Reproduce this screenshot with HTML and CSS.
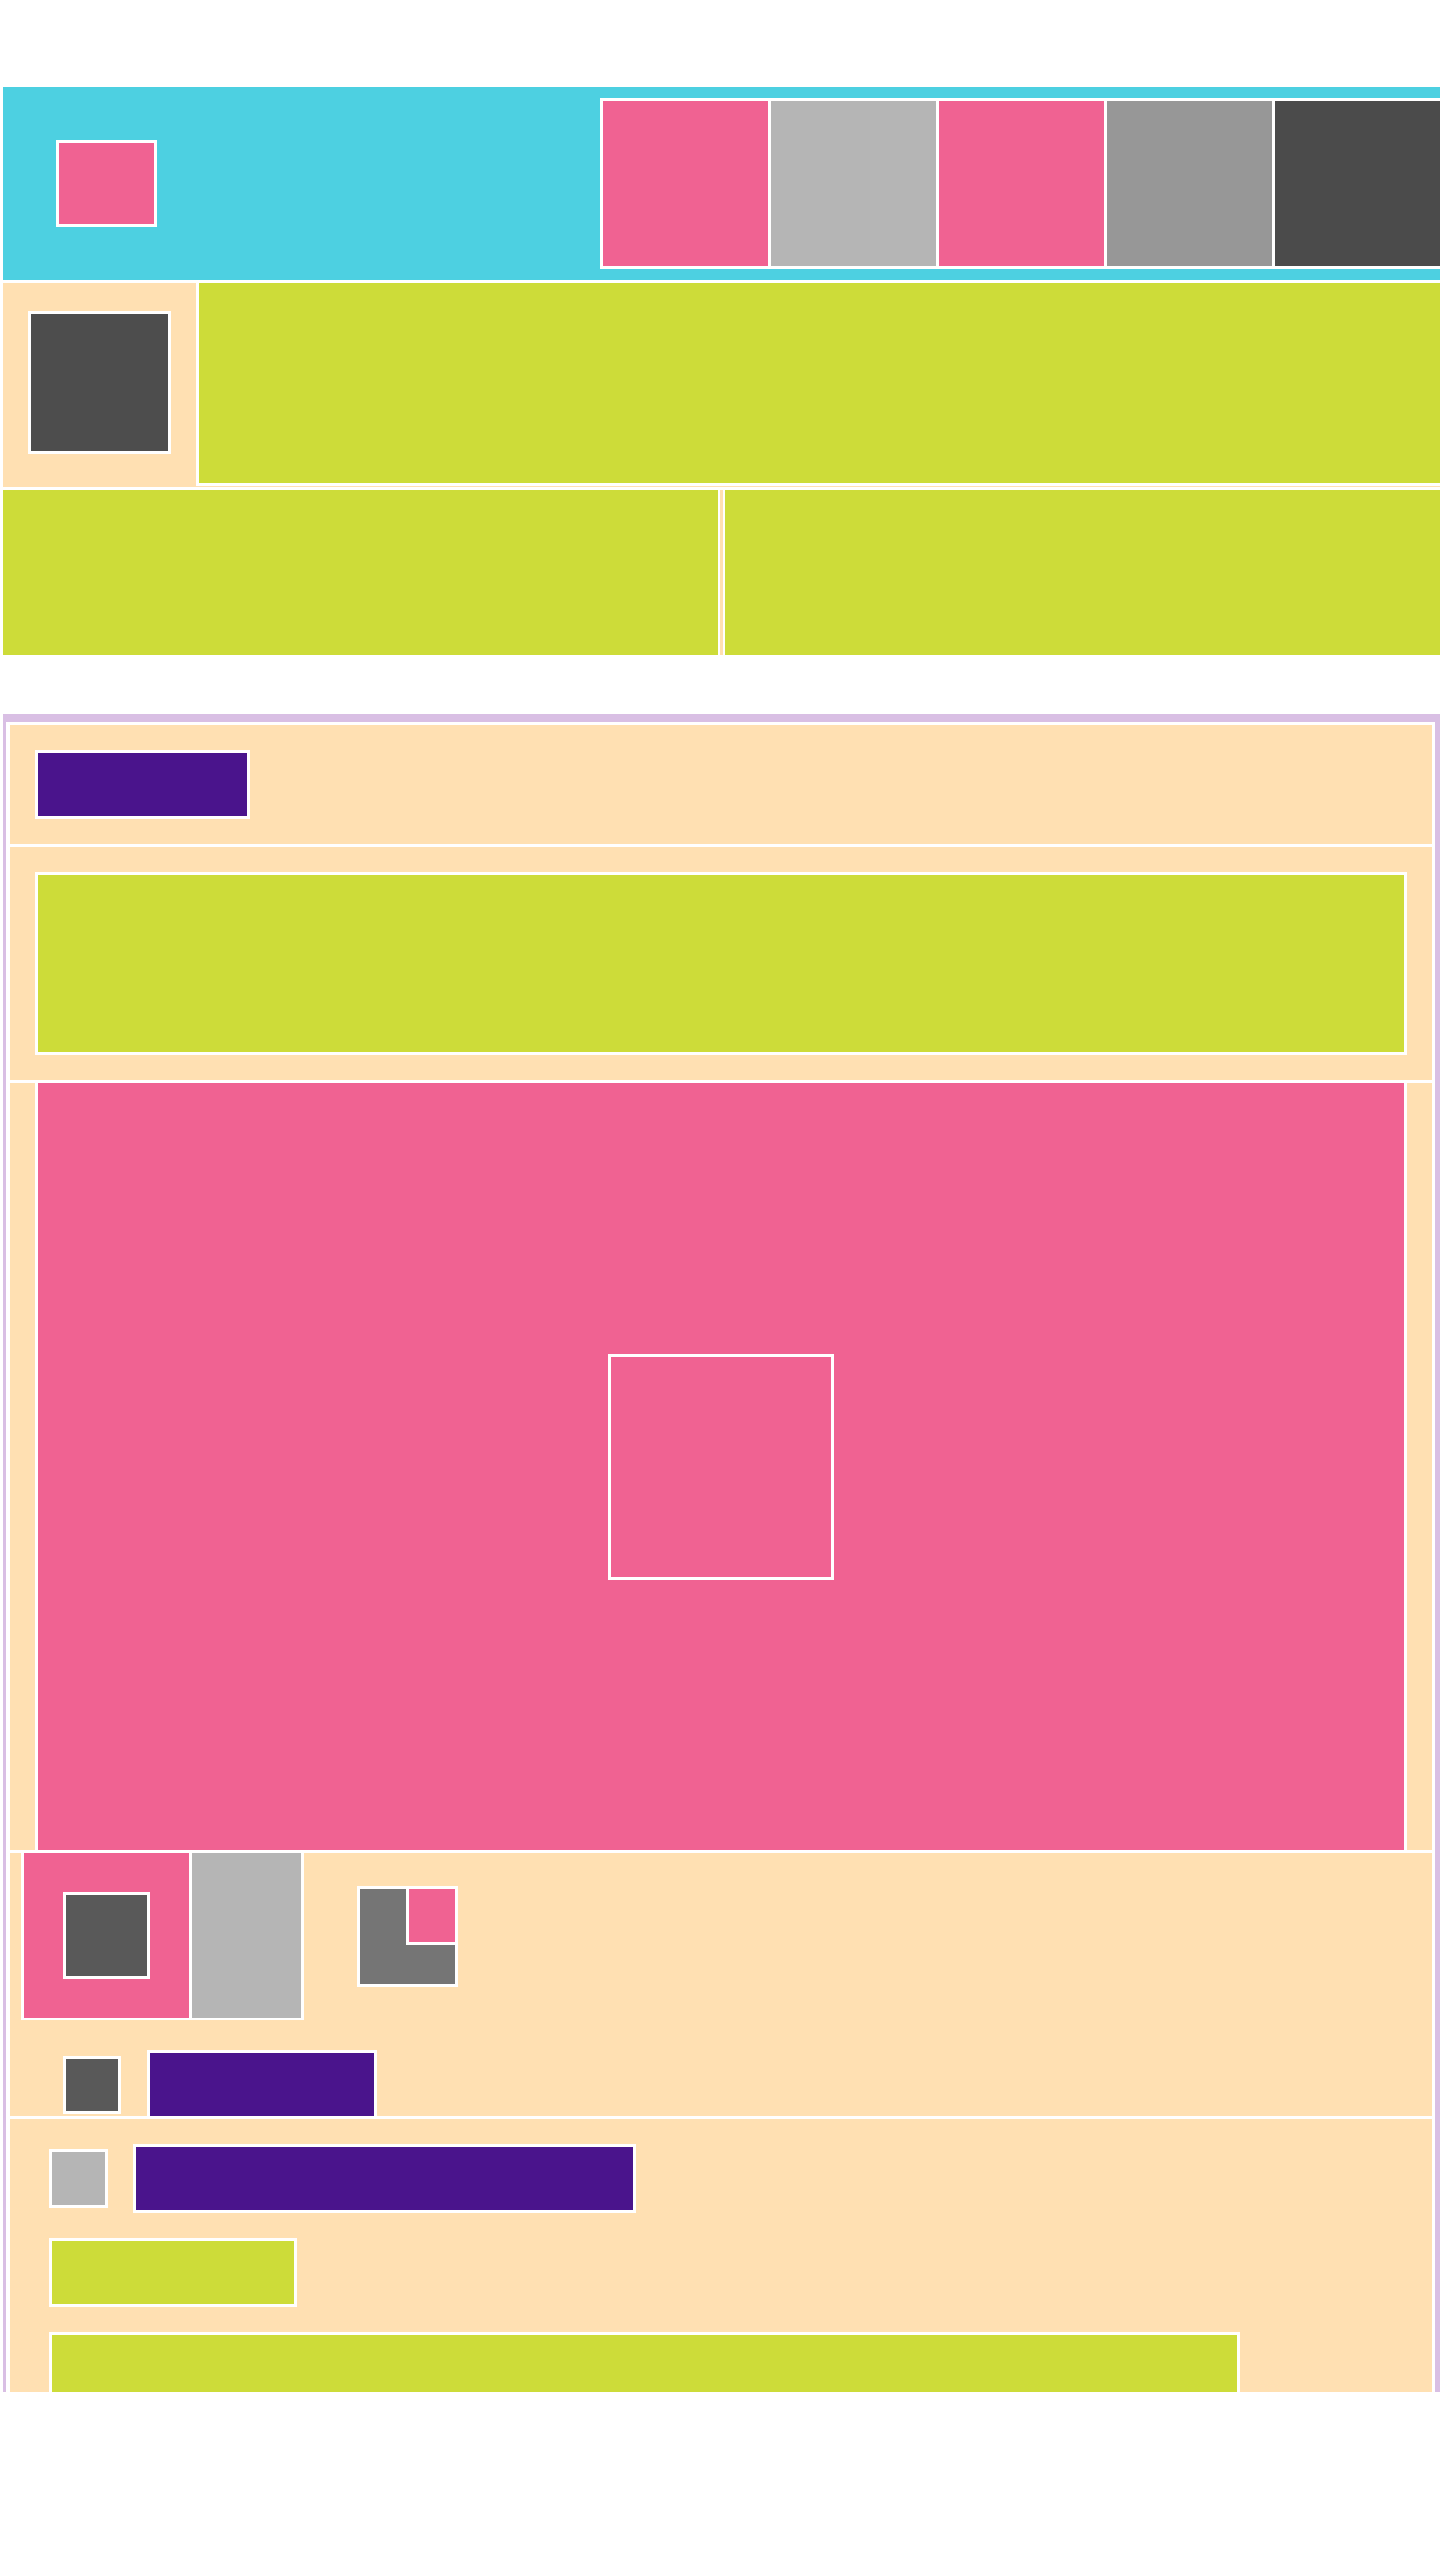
FILE: index.html
```html
<!DOCTYPE html>
<html lang="en">
<head>
<meta charset="utf-8">
<title>Layout</title>
<link rel="stylesheet" href="styles.css">
</head>
<body>
<div class="page">
  <header class="topbar">
    <div class="logo"></div>
    <nav class="tabs">
      <div class="tab tab-pink"></div>
      <div class="tab tab-light"></div>
      <div class="tab tab-pink"></div>
      <div class="tab tab-mid"></div>
      <div class="tab tab-dark"></div>
    </nav>
  </header>

  <section class="hero">
    <div class="hero-side"><div class="avatar"></div></div>
    <div class="hero-main"></div>
  </section>

  <section class="split">
    <div class="split-cell left"></div>
    <div class="split-cell right"></div>
  </section>

  <main class="board">
    <div class="board-inner">
      <div class="panel panel-title">
        <div class="title-bar"></div>
      </div>
      <div class="panel panel-banner">
        <div class="banner"></div>
      </div>
      <div class="panel panel-media">
        <div class="media"><div class="media-frame"></div></div>
      </div>
      <div class="panel panel-meta">
        <div class="meta-row">
          <div class="thumbs">
            <div class="thumb-main"><div class="thumb-icon"></div></div>
            <div class="thumb-side"></div>
          </div>
          <div class="layers"><div class="layers-top"></div></div>
        </div>
        <div class="meta-row second">
          <div class="meta-icon"></div>
          <div class="meta-label"></div>
        </div>
      </div>
      <div class="panel panel-detail">
        <div class="detail-row">
          <div class="detail-icon"></div>
          <div class="detail-title"></div>
        </div>
        <div class="detail-tag"></div>
        <div class="detail-body"></div>
      </div>
    </div>
  </main>
</div>
</body>
</html>
```

FILE: styles.css
```css
* { box-sizing: border-box; }
html, body { margin: 0; padding: 0; background: #fff; }

.page {
  width: 1440px;
  height: 2560px;
  padding: 87px 0 0 3px;
  overflow: hidden;
}

/* top bar */
.topbar {
  display: flex;
  align-items: center;
  height: 193px;
  background: #4dd0e1;
  padding-left: 53px;
  overflow: hidden;
}
.logo {
  flex: none;
  width: 101px;
  height: 87px;
  background: #f06292;
  border: 3px solid #fff;
}
.tabs {
  flex: none;
  display: flex;
  gap: 3px;
  padding: 3px;
  background: #fff;
  margin-left: 443px;
}
.tab { flex: none; width: 165px; height: 165px; }
.tab-pink { background: #f06292; }
.tab-light { background: #b5b5b5; }
.tab-mid { background: #979797; }
.tab-dark { background: #4b4b4b; }

/* hero row */
.hero {
  display: flex;
  height: 204px;
  margin-top: 3px;
  background: #ffe0b2;
}
.hero-side {
  flex: none;
  width: 193px;
  display: flex;
  justify-content: center;
  padding-top: 28px;
}
.avatar {
  width: 143px;
  height: 143px;
  background: #4d4d4d;
  border: 3px solid #fff;
}
.hero-main {
  flex: 1;
  height: 203px;
  background: #cddc39;
  border-left: 3px solid #fff;
  border-bottom: 3px solid #fff;
}

/* split row */
.split {
  display: flex;
  gap: 3px;
  height: 165px;
  margin-top: 3px;
  background: #ffe0b2;
}
.split-cell { background: #cddc39; }
.split-cell.left { flex: none; width: 717px; border-right: 2px solid #fff; }
.split-cell.right { flex: 1; border-left: 2px solid #fff; }

/* board */
.board {
  margin-top: 59px;
  height: 1678px;
  background: #d9bfe4;
  padding: 8px 5px 0 3px;
  overflow: hidden;
}
.board-inner {
  display: flex;
  flex-direction: column;
  gap: 3px;
  background: #fff;
  padding: 3px 3px 0 4px;
}
.panel { background: #ffe0b2; }

.panel-title { padding: 25px; }
.title-bar {
  width: 215px;
  height: 69px;
  background: #4a148c;
  border: 3px solid #fff;
}

.panel-banner { padding: 25px; }
.banner {
  height: 183px;
  background: #cddc39;
  border: 3px solid #fff;
}

.panel-media { height: 767px; padding: 0 25px; }
.media {
  height: 100%;
  display: flex;
  align-items: center;
  justify-content: center;
  background: #f06292;
  border-left: 3px solid #fff;
  border-right: 3px solid #fff;
}
.media-frame {
  width: 226px;
  height: 226px;
  border: 3px solid #fff;
}

.panel-meta {
  height: 263px;
  overflow: hidden;
  padding-left: 11px;
}
.meta-row { display: flex; align-items: center; }
.thumbs {
  flex: none;
  display: flex;
  gap: 3px;
  background: #fff;
  padding: 0 3px 2px;
}
.thumb-main {
  width: 165px;
  height: 165px;
  background: #f06292;
  display: flex;
  align-items: center;
  justify-content: center;
}
.thumb-icon {
  width: 87px;
  height: 87px;
  background: #595959;
  border: 3px solid #fff;
}
.thumb-side {
  width: 109px;
  height: 165px;
  background: #b5b5b5;
}
.layers {
  flex: none;
  margin-left: 53px;
  width: 101px;
  height: 101px;
  background: #757575;
  border: 3px solid #fff;
  display: flex;
  justify-content: flex-end;
  align-items: flex-start;
}
.layers-top {
  width: 49px;
  height: 56px;
  background: #f06292;
  border-left: 3px solid #fff;
  border-bottom: 3px solid #fff;
}
.meta-row.second {
  margin-top: 30px;
  padding-left: 42px;
  gap: 26px;
}
.meta-icon {
  flex: none;
  width: 58px;
  height: 58px;
  background: #595959;
  border: 3px solid #fff;
}
.meta-label {
  flex: none;
  width: 230px;
  height: 69px;
  background: #4a148c;
  border: 3px solid #fff;
}

.panel-detail {
  padding: 25px 39px;
  min-height: 400px;
}
.detail-row { display: flex; align-items: center; gap: 25px; }
.detail-icon {
  width: 59px;
  height: 59px;
  background: #b5b5b5;
  border: 3px solid #fff;
}
.detail-title {
  width: 503px;
  height: 69px;
  background: #4a148c;
  border: 3px solid #fff;
}
.detail-tag {
  margin-top: 25px;
  width: 248px;
  height: 69px;
  background: #cddc39;
  border: 3px solid #fff;
}
.detail-body {
  margin-top: 25px;
  width: 1191px;
  height: 183px;
  background: #cddc39;
  border: 3px solid #fff;
}
```
